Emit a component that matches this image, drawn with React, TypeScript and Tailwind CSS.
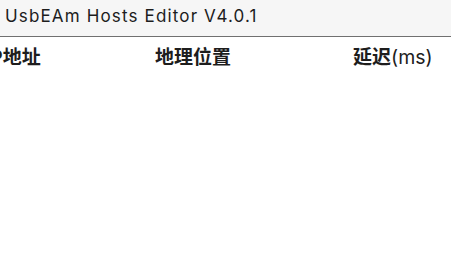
import React from 'react';

const columns = [
  { label: 'IP地址', width: 'w-[170px]' },
  { label: '地理位置', width: 'w-[198px]' },
  { label: '延迟', suffix: '(ms)', width: 'w-[120px]' },
];

const App: React.FC = () => {
  return (
    <div className="w-[451px] h-[253px] overflow-hidden bg-white text-[#1d1d1d] font-['Inter','Noto_Sans_CJK_SC',sans-serif]">
      {/* Title bar */}
      <div className="h-[37px] bg-[#f6f6f6] border-b-[1.5px] border-[#707070] pl-[5px] pt-[4px]">
        <span className="text-[17px] leading-[20px] tracking-[1.15px]">UsbEAm Hosts Editor V4.0.1</span>
      </div>

      {/* Table header */}
      <div className="flex items-center h-[41px] ml-[-15px] whitespace-nowrap">
        {columns.map((col) => (
          <div key={col.label} className={`${col.width} shrink-0 text-[19px] leading-none`}>
            <span className="font-bold">{col.label}</span>
            {col.suffix && <span className="font-normal text-[19.5px]">{col.suffix}</span>}
          </div>
        ))}
      </div>

      {/* Empty list body */}
      <div className="flex-1" />
    </div>
  );
};

export default App;
